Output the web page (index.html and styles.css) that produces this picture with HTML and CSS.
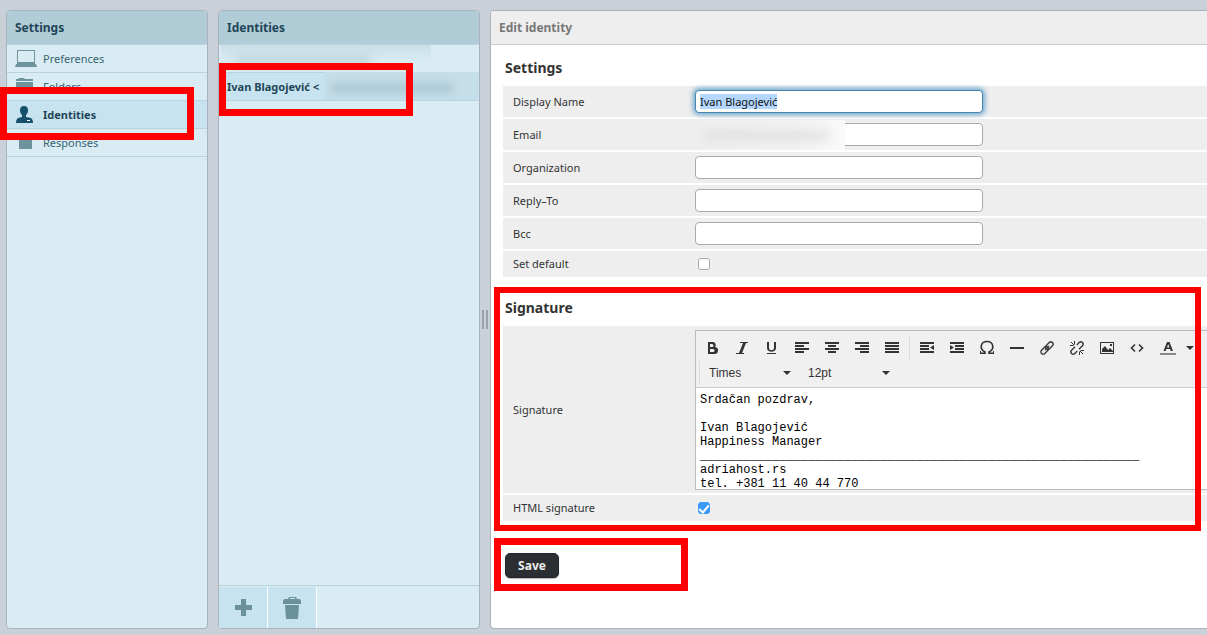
FILE: index.html
```html
<!DOCTYPE html>
<html lang="en">
<head>
<meta charset="utf-8">
<title>Edit identity</title>
<link rel="stylesheet" href="styles.css">
</head>
<body>
<div class="app">
  <nav class="panel sidebar">
    <h2 class="panel-title">Settings</h2>
    <ul class="list">
      <li class="item"><a class="link" href="#preferences"><svg class="icon" viewBox="0 0 22 20"><path d="M2 1h18v14H2zM3 2v11h16V2z" fill-rule="evenodd"/><path d="M1 15h20l1 3H0z"/></svg>Preferences</a></li>
      <li class="item"><a class="link" href="#folders"><svg class="icon" viewBox="0 0 22 20"><path d="M1 4V2h2l1-1h5l1 1h8v2zM1 5h17v11H1z"/></svg>Folders</a></li>
      <li class="item selected"><a class="link" href="#identities"><svg class="icon" viewBox="0 0 22 20"><path d="M9 1c3 0 4 2 4 4 0 3-1 4-2 5v2l5 1c1 1 2 2 2 5H1c0-3 1-4 2-5l4-1v-2C6 9 5 8 5 5c0-2 1-4 4-4z"/><path d="M12 15h3v1h-3z" fill="#fff"/></svg>Identities</a><span class="mark mark-nav"></span></li>
      <li class="item"><a class="link" href="#responses"><svg class="icon" viewBox="0 0 22 20"><path d="M4 1h13v15H4z"/></svg>Responses</a></li>
    </ul>
  </nav>

  <section class="panel identities">
    <h2 class="panel-title">Identities</h2>
    <ul class="list">
      <li class="item"><span class="veil veil-row"><span class="smudge"></span></span></li>
      <li class="item selected"><a class="link" href="#ivan">Ivan Blagojević &lt;</a><span class="veil veil-mail"><span class="smudge"></span></span><span class="mark mark-list"></span></li>
    </ul>
    <div class="actions">
      <button class="action" type="button" aria-label="Add"><svg width="18" height="18" viewBox="0 0 18 18"><path d="M7 0h5v6h6v5h-6v6H7v-6H1V6h6z"/></svg></button>
      <button class="action" type="button" aria-label="Delete"><svg width="18" height="22" viewBox="0 0 18 22"><path d="M5 2l1-2h7l1 2h3l1 2v3H0V4l1-2zM7 1v1h5V1z" fill-rule="evenodd"/><path d="M2 8h14l-1 14H3z"/></svg></button>
    </div>
  </section>

  <div class="splitter"></div>

  <main class="panel content">
    <h2 class="panel-title">Edit identity</h2>
    <form class="form">
      <section class="group">
        <h3 class="group-title">Settings</h3>
        <div class="row"><label class="label" for="name">Display Name</label><input class="text" id="name" value="Ivan Blagojević" autofocus></div>
        <div class="row"><label class="label" for="email">Email</label><input class="text" id="email"><span class="veil veil-input"><span class="smudge"></span></span></div>
        <div class="row"><label class="label" for="org">Organization</label><input class="text" id="org"></div>
        <div class="row"><label class="label" for="reply">Reply–To</label><input class="text" id="reply"></div>
        <div class="row"><label class="label" for="bcc">Bcc</label><input class="text" id="bcc"></div>
        <div class="row short"><label class="label" for="default">Set default</label><input class="check" type="checkbox" id="default"></div>
      </section>

      <section class="group">
        <h3 class="group-title">Signature</h3>
        <div class="row tall"><label class="label" for="sig">Signature</label>
          <div class="editor">
            <div class="toolbar">
              <div class="tools">
                <button class="tool" type="button" aria-label="Bold"><svg viewBox="0 0 16 16"><path d="M4 2h5a3 3 0 0 1 2 5 3.200 3.200 0 0 1-1 7H4zM6 4v3h2a1.500 1.500 0 0 0 0-3zM6 9v3h3a1.500 1.500 0 0 0 0-3z" fill-rule="evenodd"/></svg></button>
                <button class="tool" type="button" aria-label="Italic"><svg viewBox="0 0 16 16"><path d="M6 2h8v1h-2L8 13h2v1H2v-1h3L9 3H6z"/></svg></button>
                <button class="tool" type="button" aria-label="Underline"><svg viewBox="0 0 16 16"><path d="M3 2h2v6c0 3 5 3 5 0V2h2v6c0 5-9 5-9 0zM3 13h9v1H3z"/></svg></button>
                <button class="tool" type="button" aria-label="Align left"><svg viewBox="0 0 16 16"><path d="M1 2h14v2H1zM1 5h9v2H1zM1 8h14v2H1zM1 11h9v2H1z"/></svg></button>
                <button class="tool" type="button" aria-label="Align center"><svg viewBox="0 0 16 16"><path d="M1 2h14v2H1zM4 5h8v2H4zM1 8h14v2H1zM4 11h8v2H4z"/></svg></button>
                <button class="tool" type="button" aria-label="Align right"><svg viewBox="0 0 16 16"><path d="M1 2h14v2H1zM6 5h9v2H6zM1 8h14v2H1zM6 11h9v2H6z"/></svg></button>
                <button class="tool" type="button" aria-label="Justify"><svg viewBox="0 0 16 16"><path d="M1 2h14v2H1zM1 5h14v2H1zM1 8h14v2H1zM1 11h14v2H1z"/></svg></button>
                <span class="sep"></span>
                <button class="tool" type="button" aria-label="Outdent"><svg viewBox="0 0 16 16"><path d="M1 2h14v2H1zM1 5h9v2H1zM1 8h9v2H1zM1 11h14v2H1zM15 5v5l-4-2.500z"/></svg></button>
                <button class="tool" type="button" aria-label="Indent"><svg viewBox="0 0 16 16"><path d="M1 2h14v2H1zM6 5h9v2H6zM6 8h9v2H6zM1 11h14v2H1zM1 5v5l4-2.500z"/></svg></button>
                <button class="tool" type="button" aria-label="Special character"><svg viewBox="0 0 16 16"><path d="M1.500 13.200H6V12C0 9 1.500 1.500 8 1.500S16 9 10 12v1.200h4.500" fill="none" stroke="#333" stroke-width="1.600"/><path d="M1 11v3h1v-3zM14 11v3h1v-3z"/></svg></button>
                <button class="tool" type="button" aria-label="Horizontal line"><svg viewBox="0 0 16 16"><path d="M1 7h14v2H1z"/></svg></button>
                <button class="tool" type="button" aria-label="Insert link"><svg viewBox="0 0 16 16"><g class="stroke" transform="rotate(-45 8 8)"><rect x="7" y="5.700" width="8.700" height="4.600" rx="2.300"/><rect x=".3" y="5.700" width="8.700" height="4.600" rx="2.300"/><path d="M5 8h6"/></g></svg></button>
                <button class="tool" type="button" aria-label="Remove link"><svg viewBox="0 0 16 16"><g class="stroke" transform="rotate(-45 8 8)"><path d="M7.500 5.700H2.600a2.300 2.300 0 0 0 0 4.600H6M8.500 10.300h4.900a2.300 2.300 0 0 0 0-4.600H10"/></g><path d="M5.500 1v3.500M1 5.500h3.500M2 2l3 3M10.500 11.500V15M11.500 10.500H15M11 11l3 3" fill="none" stroke="#333"/></svg></button>
                <button class="tool" type="button" aria-label="Insert image"><svg viewBox="0 0 16 16"><path d="M1 2h14v12H1zM2 3v10h12V3z" fill-rule="evenodd"/><path d="M3 12V9l3-3 3 4 2-2 3 3v1zM11 4h2v2h-2z"/></svg></button>
                <button class="tool" type="button" aria-label="Source code"><svg viewBox="0 0 16 16"><path d="M6 4.500L2.500 8 6 11.500M10 4.500L13.500 8 10 11.500" fill="none" stroke="#333" stroke-width="1.600"/></svg></button>
                <button class="tool color" type="button" aria-label="Text color"><svg viewBox="0 0 16 16"><path d="M7 2h2.500L13 11h-2.200l-.8-2H6.300l-.8 2H3.500zM8.200 4L7 7.500h2.400z" fill-rule="evenodd"/><path d="M0 13h16v2H0z" fill="#888"/></svg></button>
                <button class="tool arrow" type="button" aria-label="Choose color"><svg viewBox="0 0 8 4"><path d="M0 0h8L4 4z"/></svg></button>
              </div>
              <div class="tools second">
                <span class="pick"><select class="select" aria-label="Font family"><option>Times</option></select><svg viewBox="0 0 8 4"><path d="M0 0h8L4 4z"/></svg></span>
                <span class="pick"><select class="select" aria-label="Font size"><option>12pt</option></select><svg viewBox="0 0 8 4"><path d="M0 0h8L4 4z"/></svg></span>
              </div>
            </div>
            <textarea class="body" id="sig" spellcheck="false">Srdačan pozdrav,

Ivan Blagojević
Happiness Manager
_____________________________________________________________
adriahost.rs
tel. +381 11 40 44 770</textarea>
          </div>
        </div>
        <div class="row short"><label class="label" for="html">HTML signature</label><input class="check" type="checkbox" id="html" checked></div>
        <span class="mark mark-signature"></span>
      </section>

      <div class="footer"><button class="save" type="button">Save</button><span class="mark mark-save"></span></div>
    </form>
  </main>
</div>
<script src="main.js"></script>
</body>
</html>
```
FILE: styles.css
```css
* { box-sizing: border-box; }
body {
  margin: 0;
  background: #c9d0d8;
  color: #333;
  font-family: "Noto Sans", "Open Sans", sans-serif;
  font-size: 11px;
  line-height: 16px;
}
.app {
  display: flex;
  min-height: 100vh;
  padding: 10px 0 6px 6px;
  overflow: hidden;
}
.panel {
  display: flex;
  flex-direction: column;
  border: 1px solid #a9b3bf;
  border-radius: 4px;
  background: #d9ecf3;
}
.sidebar { flex: 0 0 202px; margin-right: 10px; }
.identities { flex: 0 0 262px; }
.content {
  flex: 1;
  min-width: 0;
  border-right: 0;
  border-radius: 4px 0 0 4px;
  background: #fff;
}
.panel-title {
  margin: 0;
  padding: 8px;
  height: 34px;
  border-bottom: 1px solid #bbd3da;
  border-radius: 3px 3px 0 0;
  background: #b0ccd7;
  color: #1f4658;
  font-size: 12px;
  line-height: 17px;
}
.content .panel-title {
  border-color: #ccc;
  border-radius: 3px 0 0 0;
  background: #eee;
  color: #777;
}
.list { margin: 0; padding: 0; list-style: none; flex: 1; }
.item {
  position: relative;
  height: 28px;
  border-bottom: 1px solid #bbd3da;
}
.selected { background: #c7e3ef; }
.link {
  display: flex;
  align-items: center;
  gap: 6px;
  height: 27px;
  padding-left: 8px;
  color: #376572;
  text-decoration: none;
}
.selected .link { color: #1f4658; font-weight: bold; }
.icon { width: 22px; height: 20px; fill: #6d939c; }
.selected .icon { fill: #17506a; }

.actions {
  display: flex;
  height: 43px;
  padding-top: 1px;
  border-top: 1px solid #bbd3da;
}
.action {
  width: 49px;
  padding: 0;
  border: 0;
  border-right: 1px solid #fff;
  background: #c7e3ef;
}
.action svg { display: block; margin: auto; fill: #6b929b; }

.splitter {
  align-self: center;
  flex: 0 0 6px;
  height: 19px;
  margin: 0 2px;
  border: solid #9aa2a9;
  border-width: 0 2px;
}

.form { padding: 12px 0 0 12px; }
.group { position: relative; margin-bottom: 20px; }
.group-title {
  margin: 0;
  padding: 2px 2px 9px;
  font-size: 14px;
  line-height: 18px;
}
.row {
  position: relative;
  display: flex;
  align-items: center;
  min-height: 31px;
  margin-bottom: 2px;
  background: #eee;
}
.short { min-height: 26px; }
.tall { min-height: 167px; }
.label { flex: 0 0 192px; padding-left: 10px; }
.text {
  width: 288px;
  height: 23px;
  padding: 0 4px;
  border: 1px solid #aaa;
  border-radius: 4px;
  background: #fff;
  color: #111;
  font: 11px "Noto Sans", "Open Sans", sans-serif;
}
.text:focus {
  border-color: #4787b1;
  outline: 0;
  box-shadow: 0 0 5px 2px #71a9ce;
}
.text::selection { background: #b3d7ff; color: #111; }
.check {
  appearance: none;
  width: 12px;
  height: 12px;
  margin: 0 3px;
  border: 1px solid #aaa;
  border-radius: 3px;
  background: #fff;
}
.check:checked {
  display: flex;
  justify-content: center;
  border-color: #3b99fc;
  background: #3b99fc;
}
.check:checked::after {
  content: "";
  width: 4px;
  height: 8px;
  border: solid #fff;
  border-width: 0 2px 2px 0;
  transform: rotate(40deg);
}

.editor {
  flex: 1;
  min-width: 0;
  border: 1px solid #bbb;
  border-right: 0;
}
.toolbar {
  height: 57px;
  padding: 4px 0 0 1px;
  border-bottom: 1px solid #ccc;
  background: #f0f0f0;
  overflow: hidden;
}
.tools { display: flex; align-items: center; height: 26px; }
.tool {
  flex: 0 0 30px;
  height: 24px;
  padding: 0;
  border: 0;
  background: none;
}
.tool svg { display: block; width: 16px; height: 16px; margin: auto; fill: #333; }
.tool .stroke { fill: none; stroke: #333; stroke-width: 1.3; }
.sep { flex: 0 0 1px; height: 24px; margin: 0 2px; background: #ddd; }
.tool.color { flex-basis: 32px; }
.tool.arrow { flex-basis: 12px; }
.tool.arrow svg { width: 8px; height: 4px; }
.second { height: 24px; margin-left: 2px; border-left: 1px solid #ddd; }
.pick { display: flex; align-items: center; width: 99px; padding-left: 9px; }
.select {
  appearance: none;
  width: 74px;
  padding: 0;
  border: 0;
  background: none;
  color: #333;
  font: 12px "Liberation Sans", sans-serif;
}
.pick svg { width: 8px; height: 4px; fill: #333; }
.body {
  display: block;
  width: 100%;
  height: 101px;
  padding: 5px 4px 0;
  border: 0;
  outline: 0;
  resize: none;
  overflow: hidden;
  color: #000;
  font: 12px/14px "Liberation Mono", monospace;
}

.footer { position: relative; padding: 12px 2px; }
.save {
  display: block;
  width: 54px;
  height: 25px;
  padding: 0;
  border: 1px solid #23272c;
  border-radius: 5px;
  background: #2b2e33;
  box-shadow: 0 1px 1px #bbb;
  color: #eee;
  font: bold 12px "Noto Sans", sans-serif;
}

/* Highlight frames drawn over the panels */
.mark { position: absolute; border: 7px solid #f00; pointer-events: none; z-index: 2; }
.mark-nav { left: -7px; right: 13px; top: -14px; height: 53px; }
.mark-list { left: 0; width: 194px; top: -10px; height: 53px; }
.mark-signature { left: -9px; right: 6px; top: -10px; bottom: -10px; border-width: 6px; }
.mark-save { left: -9px; width: 194px; top: -3px; height: 53px; }

/* Redacted addresses */
.veil { position: absolute; overflow: hidden; }
.smudge { position: absolute; filter: blur(5px); }
.veil-row { left: 2px; top: 0; width: 210px; height: 27px; background: linear-gradient(#c9dfe7, #d9ecf3 60%); }
.veil-row .smudge { left: 14px; top: 10px; width: 136px; height: 9px; background: #bfd3db; }
.veil-mail { left: 106px; top: -1px; right: 1px; height: 28px; background: #c5dfea; }
.veil-mail .smudge { left: 6px; top: 12px; width: 122px; height: 8px; background: #a6c2cf; }
.veil-input { left: 189px; top: 1px; width: 153px; height: 30px; background: linear-gradient(90deg, #eee, #f1f1f1 70%, #fafafa); }
.veil-input .smudge { left: 12px; top: 12px; width: 125px; height: 7px; background: #dedede; }
```
FILE: main.js
```js
const field = document.getElementById("name");
field.focus();
field.select();
```
